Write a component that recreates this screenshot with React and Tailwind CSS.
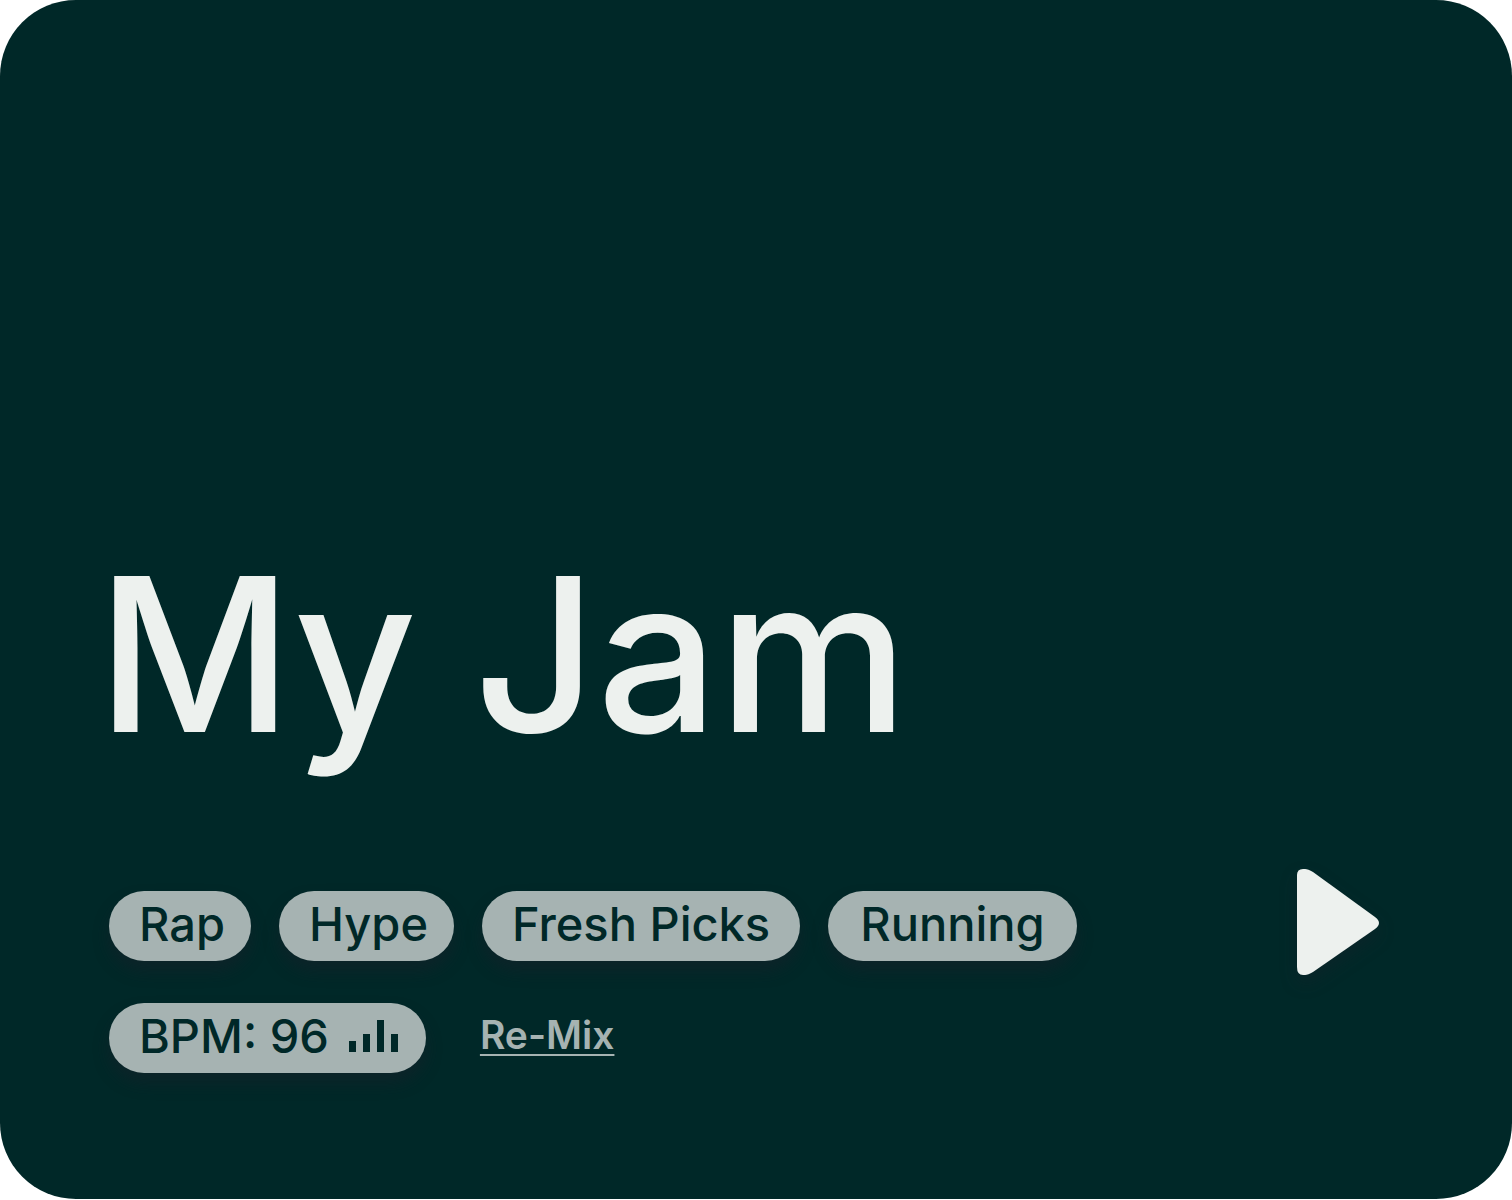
import React from 'react';

const tags = [
    { name: 'Rap', padding: 'pl-[30px] pr-[26px]' },
    { name: 'Hype', padding: 'pl-[30px] pr-[26px]' },
    { name: 'Fresh Picks', padding: 'px-[30px]' },
    { name: 'Running', padding: 'px-8' },
];

const chipStyle = 'h-[70px] flex items-center rounded-full bg-[#a6b3b2] pb-1 text-[47px] leading-[48px] font-medium shadow-[0_10px_16px_rgba(30,30,42,0.4)]';

const BpmIcon = () => (
    <svg width="49" height="32" viewBox="0 0 49 32" fill="currentColor" aria-hidden="true">
        <rect x="0" y="21" width="7" height="11" />
        <rect x="14" y="14" width="7" height="18" />
        <rect x="28" y="0" width="7" height="32" />
        <rect x="42" y="14" width="7" height="18" />
    </svg>
);

const PlayIcon = () => (
    <svg width="84" height="106" viewBox="0 0 84 106" fill="#edf1ee" aria-hidden="true" className="drop-shadow-[0_8px_8px_rgba(30,30,42,0.3)]">
        <path d="M0 6Q0 0 6 0H8Q11 0 16 3L78 48Q82 51 82 54Q82 57 78 60L16 103Q11 106 8 106H6Q0 106 0 98Z" />
    </svg>
);

const App = () => {
    return (
        <div className="min-h-screen bg-white pb-px flex">
            <main className="flex-1 flex flex-col justify-end rounded-[76px] bg-[#002828] pl-[109px] pr-[131px] pb-[126px] text-[#002828] font-['Inter',sans-serif]">
                <h1 className="-ml-3 text-[214px] leading-[240px] font-medium text-[#edf1ee]">My Jam</h1>

                <div className="mt-[94px] flex items-start justify-between">
                    <div className="flex flex-col gap-[42px] pt-[22px]">
                        <ul className="flex flex-wrap gap-7">
                            {tags.map((tag) => (
                                <li key={tag.name} className={`${chipStyle} ${tag.padding}`}>
                                    {tag.name}
                                </li>
                            ))}
                        </ul>

                        <div className="flex items-center gap-[54px]">
                            <div className={`${chipStyle} gap-5 pl-[30px] pr-7`}>
                                <span>BPM: 96</span>
                                <BpmIcon />
                            </div>
                            <a href="#remix" className="pb-1.5 text-[39px] leading-[48px] font-semibold text-[#a6b3b2] underline decoration-2 underline-offset-[5px]">
                                Re-Mix
                            </a>
                        </div>
                    </div>

                    <button type="button" aria-label="Play" className="cursor-pointer">
                        <PlayIcon />
                    </button>
                </div>
            </main>
        </div>
    );
};

export default App;
